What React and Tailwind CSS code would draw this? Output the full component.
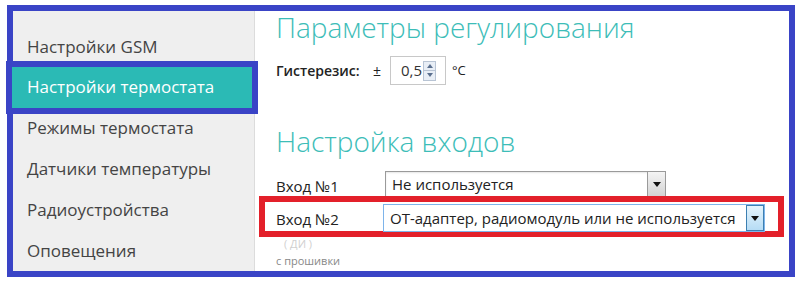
import React from "react";

const menu = [
  "Настройки GSM",
  "Настройки термостата",
  "Режимы термостата",
  "Датчики температуры",
  "Радиоустройства",
  "Оповещения",
];

const Arrow = ({ active }) => (
  <div
    className={
      active
        ? "w-[18px] h-full border border-[#3c7fb1] bg-gradient-to-b from-[#e5f4fc] to-[#b6dcf5] flex items-center justify-center"
        : "w-[18px] h-full border-l border-[#9a9a9a] bg-gradient-to-b from-[#f4f4f4] to-[#d4d4d4] flex items-center justify-center"
    }
  >
    <svg width="8" height="5" viewBox="0 0 8 5">
      <path d="M0 0h8L4 5z" fill="#111" />
    </svg>
  </div>
);

const Spinner = () => (
  <div className="flex flex-col w-[13px] h-[20px] border border-[#b8c4d4]">
    <div className="flex-1 flex items-center justify-center bg-[#e8eef6] border-b border-[#b8c4d4]">
      <svg width="6" height="4" viewBox="0 0 6 4">
        <path d="M0 4h6L3 0z" fill="#5a6f8e" />
      </svg>
    </div>
    <div className="flex-1 flex items-center justify-center bg-[#e8eef6]">
      <svg width="6" height="4" viewBox="0 0 6 4">
        <path d="M0 0h6L3 4z" fill="#5a6f8e" />
      </svg>
    </div>
  </div>
);

const App = () => {
  return (
    <div
      className="w-[800px] h-[284px] bg-white overflow-hidden pt-[5px] pl-[7px]"
      style={{ fontFamily: '"Open Sans", "Noto Sans", sans-serif' }}
    >
      <div className="w-[788px] h-[272px] border-[6px] border-[#3a44c6] flex">
        {/* sidebar */}
        <div className="w-[242px] h-full bg-[#efefef] border-r border-[#dcdcdc] pt-[15px] flex flex-col">
          {menu.map((item, i) =>
            i === 1 ? (
              <div
                key={item}
                className="relative z-10 -my-[6px] -ml-[7px] -mr-[4px] h-[53px] border-[6px] border-[#3a44c6] bg-[#2bbab5] pl-[15px] flex items-center text-[17px] text-white"
              >
                {item}
              </div>
            ) : (
              <div key={item} className="h-[41px] pl-[14px] flex items-center text-[17px] text-[#444]">
                {item}
              </div>
            )
          )}
        </div>

        {/* content */}
        <div className="flex-1 flex flex-col pl-[21px]">
          <h1 className="text-[28px] leading-[32px] font-light text-[#3dbdb8]">Параметры регулирования</h1>

          <div className="mt-[13px] h-[29px] flex items-center text-[14px] text-[#222]">
            <span className="w-[97px] font-semibold">Гистерезис:</span>
            <span className="w-[17px] text-[14px]">±</span>
            <div className="w-[56px] h-[29px] border border-[#c8c8c8] flex items-center pl-[10px] gap-[1px]">
              <span className="text-[15px] text-[#333]">0,5</span>
              <Spinner />
            </div>
            <span className="ml-[6px] text-[13px]">°C</span>
          </div>

          <h2 className="mt-[40px] text-[28px] leading-[32px] font-light text-[#3dbdb8]">Настройка входов</h2>

          <div className="mt-[14px] h-[26px] flex items-center text-[15px] text-[#222]">
            <span className="w-[109px] pt-[4px]">Вход №1</span>
            <div className="w-[281px] h-[26px] border border-[#9a9a9a] bg-white flex items-stretch shadow-[inset_0_1px_2px_rgba(0,0,0,0.1)]">
              <span className="flex-1 pl-[6px] flex items-center text-[15px] text-[#222]">Не используется</span>
              <Arrow />
            </div>
          </div>

          <div className="relative z-10 -mt-[1px] -ml-[17px] mr-[5px] h-[41px] border-[6px] border-[#e3202a] pl-[11px] pt-[2px] flex items-start text-[15px] text-[#222]">
            <span className="w-[107px] h-[27px] flex items-center pt-[4px]">Вход №2</span>
            <div className="w-[382px] h-[28px] border border-[#7eb4ea] bg-white flex items-stretch">
              <span className="flex-1 pl-[6px] flex items-center text-[15px] text-[#222] whitespace-nowrap">
                ОТ-адаптер, радиомодуль или не используется
              </span>
              <Arrow active />
            </div>
          </div>

          <div className="mt-[1px] pl-[8px] text-[11px] leading-[12px] text-[#d0d0d0]">( ДИ )</div>
          <div className="mt-[3px] text-[11px] text-[#888]">с прошивки</div>
        </div>
      </div>
    </div>
  );
};

export default App;
